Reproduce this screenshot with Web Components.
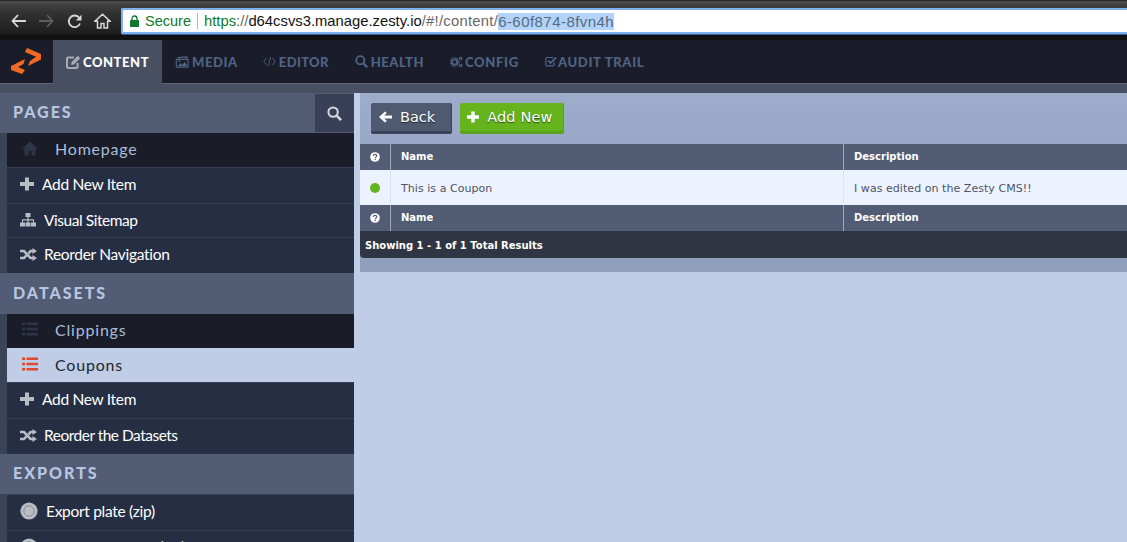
<!DOCTYPE html>
<html>
<head>
<meta charset="utf-8">
<title>Zesty</title>
<style>
  html, body { margin: 0; height: 100%; overflow: hidden; background: #bfcde6; }
  body { display: flex; flex-direction: column; font-family: "Lato", sans-serif; }
  .workspace { flex: 1; display: flex; min-height: 0; }
</style>
</head>
<body>
<browser-bar url-host="d64csvs3.manage.zesty.io" url-path="/#!/content/" url-sel="6-60f874-8fvn4h"></browser-bar>
<app-nav></app-nav>
<div class="workspace">
  <side-panel>
    <side-head search>PAGES</side-head>
    <side-item kind="dark" icon="home" pad="55" pb="4">Homepage</side-item>
    <side-item icon="plus" pad="42" h="36" pb="4">Add New Item</side-item>
    <side-item icon="sitemap" pad="44" h="34" pb="1" ls="-0.45">Visual Sitemap</side-item>
    <side-item icon="random" pad="44" h="36" pb="3">Reorder Navigation</side-item>
    <side-head h="41" pb="2">DATASETS</side-head>
    <side-item kind="dark" icon="list" pad="55" pb="4">Clippings</side-item>
    <side-item kind="active" icon="list" pad="55" pb="2">Coupons</side-item>
    <side-item icon="plus" pad="42" h="36" pb="4">Add New Item</side-item>
    <side-item icon="random" pad="44" h="36" pb="3" ls="-0.5">Reorder the Datasets</side-item>
    <side-head>EXPORTS</side-head>
    <side-item icon="disc" pad="46" h="36" pb="4">Export plate (zip)</side-item>
    <side-item icon="disc" pad="46" h="36" pb="4">Export resources (zip)</side-item>
  </side-panel>
  <main-area>
    <div slot="actions">
      <action-btn icon="back">Back</action-btn>
      <action-btn icon="plus" color="green">Add New</action-btn>
    </div>
    <data-table name="This is a Coupon" desc="I was edited on the Zesty CMS!!" total="Showing 1 - 1 of 1 Total Results"></data-table>
  </main-area>
</div>

<script>
const icons = {
  home: '<svg viewBox="0 0 16 15" width="16" height="15"><path fill="currentColor" d="M8 0.500 16 7.800H13.500V14.500H9.500V10H6.500V14.500H2.500V7.800H0Z"/></svg>',
  plus: '<svg viewBox="0 0 14 14" width="14" height="14"><path fill="currentColor" d="M5 0.500H9V5H14V9H9V13.500H5V9H0V5H5Z"/></svg>',
  sitemap: '<svg viewBox="0 0 16 14" width="16" height="14"><path fill="currentColor" d="M5.500 0H10.500V4H8.600V6.200H14V9.500H16V13.500H11V9.500H13V7.400H8.600V9.500H10.500V13.500H5.500V9.500H7.400V7.400H3V9.500H5V13.500H0V9.500H2V6.200H7.400V4H5.500Z"/></svg>',
  random: '<svg viewBox="0 0 17 13" width="17" height="13"><g fill="none" stroke="currentColor" stroke-width="2.600"><path d="M0 3H4L10.500 10H13"/><path d="M0 10H4L6.500 7.400"/><path d="M8.500 5.600 10.500 3H13"/></g><path fill="currentColor" d="M12.500 0 17 3 12.500 6ZM12.500 7 17 10 12.500 13Z"/></svg>',
  list: '<svg viewBox="0 0 16 14" width="16" height="14"><path fill="currentColor" d="M0 0.500H3V3H0ZM4.500 0.500H16V3H4.500ZM0 5.700H3V8.200H0ZM4.500 5.700H16V8.200H4.500ZM0 11H3V13.500H0ZM4.500 11H16V13.500H4.500Z"/></svg>',
  disc: '<svg viewBox="0 0 18 18" width="18" height="18"><circle cx="9" cy="9" r="8.600" fill="currentColor"/><circle cx="9" cy="9" r="5.200" fill="none" stroke="#8d8f97" stroke-width="1"/></svg>',
  search: '<svg viewBox="0 0 16 16" width="15" height="15"><circle cx="6.500" cy="6.500" r="5" fill="none" stroke="currentColor" stroke-width="2.200"/><path d="M10.300 10.300 15 15" stroke="currentColor" stroke-width="2.800" fill="none"/></svg>',
  back: '<svg viewBox="0 0 13 12" width="13" height="12"><path fill="currentColor" d="M6 0.500 7.800 2.300 5.100 4.500H13V7.500H5.100L7.800 9.700 6 11.500 0 6Z"/></svg>',
  question: '<svg viewBox="0 0 10 10" width="10" height="10"><circle cx="5" cy="5" r="4.800" fill="currentColor"/><path d="M3.200 3.900C3.300 2.900 4 2.400 5 2.400 6 2.400 6.800 3 6.800 3.800 6.800 4.900 5.400 4.900 5.400 6" fill="none" stroke="#525c74" stroke-width="1.200"/><rect x="4.600" y="6.600" width="1.300" height="1.300" fill="#525c74"/></svg>',
  edit: '<svg viewBox="0 0 15 14" width="15" height="14"><path fill="none" stroke="currentColor" stroke-width="2" d="M11.500 8V12C11.500 12.600 11 13 10.500 13H2C1.400 13 1 12.600 1 12V3.500C1 2.900 1.400 2.500 2 2.500H8"/><path fill="currentColor" d="M5.500 7.200 11.800 0.800 14.200 3.200 7.900 9.500 5.200 10Z"/></svg>',
  media: '<svg viewBox="0 0 16 13" width="14" height="12"><g fill="none" stroke="currentColor" stroke-width="1.300"><path d="M1.500 3.500V11.500C1.500 12 2 12.300 2.500 12.300H14C14.600 12.300 15 12 15 11.500V4.500C15 4 14.600 3.500 14 3.500Z"/><path d="M3.500 3 3.800 1.500 13.500 0.700 14 3"/></g><path fill="currentColor" d="M3.200 11 6.500 7.500 8.500 9.500 11 6.500 13.500 9.500V11Z"/><circle cx="5" cy="5.700" r="1.200" fill="currentColor"/></svg>',
  code: '<svg viewBox="0 0 13 11" width="13" height="11"><path fill="none" stroke="currentColor" stroke-width="0.900" d="M3.500 2 0.800 5.500 3.500 9M9.500 2 12.200 5.500 9.500 9M7.700 0.800 5.300 10.200"/></svg>',
  gears: '<svg viewBox="0 0 17 15" width="13" height="12"><circle cx="6" cy="7.500" r="3.500" fill="none" stroke="currentColor" stroke-width="2.400"/><circle cx="6" cy="7.500" r="5.700" fill="none" stroke="currentColor" stroke-width="1.500" stroke-dasharray="2 1.600"/><circle cx="14" cy="3" r="1.600" fill="none" stroke="currentColor" stroke-width="1.500"/><circle cx="14" cy="12" r="1.600" fill="none" stroke="currentColor" stroke-width="1.500"/></svg>',
  check: '<svg viewBox="0 0 15 13" width="12" height="11"><path fill="none" stroke="currentColor" stroke-width="1.500" d="M11.500 7.500V10.500C11.500 11.400 11 12 10 12H2.500C1.500 12 1 11.400 1 10.500V3C1 2 1.500 1.500 2.500 1.500H10"/><path fill="none" stroke="currentColor" stroke-width="2.200" d="M3.800 5.500 6.800 8.300 13.800 1.500"/></svg>'
};

class BrowserBar extends HTMLElement {
  constructor() {
    super();
    const shadow = this.attachShadow({mode: "open"});
    shadow.innerHTML = `
      <style>
        :host { display: flex; align-items: flex-start; height: 40px; box-sizing: border-box; padding-top: 8px; flex: none;
          background: linear-gradient(#1c1c1c 0, #555 2px, #424242 4px, #333 12px, #1d1d1d 34px, #111 35px, #111 100%);
          font-family: "Liberation Sans", Arial, sans-serif; }
        .nav { width: 121px; height: 26px; flex: none; display: flex; align-items: center; padding-left: 11px; box-sizing: border-box; gap: 13px; color: #d8d8d8; }
        svg { display: block; flex: none; }
        .url { flex: 1; height: 26px; box-sizing: border-box; background: #fff; border: 2px solid #7fb0ee; border-right: 0;
          border-radius: 2px 0 0 2px; box-shadow: 0 1px 0 #2f5f9f; display: flex; align-items: center; font-size: 14.800px; white-space: nowrap; padding-left: 7px; }
        .secure { color: #0b7a2a; font-size: 14.500px; }
        .lock { margin-right: 6px; }
        .bar { width: 1px; height: 16px; background: #b5b5b5; margin: 0 6px; }
        .https { color: #0b7a2a; }
        .grey { color: #666; }
        .path { letter-spacing: 0.270px; }
        .host { color: #111; }
        .sel { background: #b3d3f8; color: #566a80; font-size: 15px; letter-spacing: 0.450px; }
      </style>
      <div class="nav">
        <svg width="15" height="14" viewBox="0 0 15 14"><path d="M7 1 1.500 7 7 13M1.500 7H15" fill="none" stroke="currentColor" stroke-width="1.800"/></svg>
        <svg width="15" height="14" viewBox="0 0 15 14" style="color:#5e5e5e"><path d="M8 1 13.500 7 8 13M13.500 7H0" fill="none" stroke="currentColor" stroke-width="1.800"/></svg>
        <svg width="15" height="15" viewBox="0 0 15 15"><path d="M13 9.500A5.800 5.800 0 1 1 12 3.500" fill="none" stroke="currentColor" stroke-width="1.800"/><path d="M14.500 0.800V6.500H8.800Z" fill="currentColor"/></svg>
        <svg width="17" height="16" viewBox="0 0 17 16" style="margin-left:-1px"><path d="M8.500 1.200 1 8.200H3.500V15H7V10.500H10V15H13.500V8.200H16Z" fill="none" stroke="currentColor" stroke-width="1.500"/></svg>
      </div>
      <div class="url">
        <svg class="lock" width="9" height="12" viewBox="0 0 9 12"><path d="M2 5V3.500C2 1.900 3 1 4.500 1S7 1.900 7 3.500V5" fill="none" stroke="#0b7a2a" stroke-width="1.300"/><rect y="5" width="9" height="7" rx="0.800" fill="#0b7a2a"/></svg>
        <span class="secure">Secure</span><span class="bar"></span><span class="https">https</span><span class="grey">://</span><span class="host">${this.getAttribute("url-host")}</span><span class="grey path">${this.getAttribute("url-path")}</span><span class="sel">${this.getAttribute("url-sel")}</span>
      </div>
    `;
  }
}
customElements.define("browser-bar", BrowserBar);

class AppNav extends HTMLElement {
  constructor() {
    super();
    const shadow = this.attachShadow({mode: "open"});
    // icon, label, active, gap after the icon, letter spacing
    const tabs = [["edit","CONTENT",true,2,0.55],["media","MEDIA",false,3,0.6],["code","EDITOR",false,3,0.35],["search","HEALTH",false,3,0.5],["gears","CONFIG",false,2,0.7],["check","AUDIT TRAIL",false,1,0.7]];
    shadow.innerHTML = `
      <style>
        :host { display: block; flex: none; height: 53px; background: #494f62; }
        .top { height: 43px; background: #1a1d29; border-bottom: 1px solid #5c6378; display: flex; }
        .logo { width: 53px; flex: none; display: flex; align-items: center; padding-left: 11px; box-sizing: border-box; padding-bottom: 1px; }
        .tab { display: flex; align-items: center; padding: 0 13px; color: #506385; font: 900 13px "Lato", sans-serif; white-space: nowrap; }
        .tab.on { background: #494f62; color: #fff; margin-bottom: -1px; padding-bottom: 1px; }
        .tab.on svg { color: #a9abb3; }
        .tab.code { margin-left: -1px; }
        svg { display: block; flex: none; }
      </style>
      <div class="top">
        <div class="logo">
          <svg width="30" height="26" viewBox="0 0 30 26"><path fill="#f26a21" d="M16 0 30 6V11.500L17 18 19 13 25 8.700 14 4ZM0 18 14 11 12.500 16 7 19 14 22 11 26 0 22Z"/></svg>
        </div>
        ${tabs.map(t => `<div class="tab ${t[0]} ${t[2] ? "on" : ""}">${t[0] === "search" ? icons.search.replace('width="15" height="15"', 'width="13" height="13"') : icons[t[0]]}<span style="margin-left:${t[3]}px;letter-spacing:${t[4]}px">${t[1]}</span></div>`).join("")}
      </div>
    `;
  }
}
customElements.define("app-nav", AppNav);

class SidePanel extends HTMLElement {
  constructor() {
    super();
    this.attachShadow({mode: "open"}).innerHTML = `
      <style>
        :host { display: block; width: 354px; flex: none; background: #3a4459; overflow: hidden; }
      </style>
      <slot></slot>
    `;
  }
}
customElements.define("side-panel", SidePanel);

class SideHead extends HTMLElement {
  constructor() {
    super();
    const search = this.hasAttribute("search");
    this.attachShadow({mode: "open"}).innerHTML = `
      <style>
        :host { display: flex; height: ${this.getAttribute("h") || 40}px; align-items: center; justify-content: space-between; background: #525c74;
          color: #b7c5e0; font: 900 16px "Lato", sans-serif; letter-spacing: 2px; padding-left: 13px; box-sizing: border-box; }
        .l { padding-bottom: ${this.getAttribute("pb") || 3}px; }
        .s { width: 39px; height: 38px; background: #383f56; display: flex; align-items: center; justify-content: center; color: #d5d8de; }
      </style>
      <span class="l"><slot></slot></span>
      ${search ? `<div class="s">${icons.search}</div>` : ""}
    `;
  }
}
customElements.define("side-head", SideHead);

class SideItem extends HTMLElement {
  constructor() {
    super();
    const kind = this.getAttribute("kind") || "plain";
    const pad = this.getAttribute("pad");
    const h = this.getAttribute("h") || 34;
    const pb = this.getAttribute("pb") || 0;
    const big = kind !== "plain";
    const ls = this.getAttribute("ls") || (big ? 0.8 : -0.3);
    this.attachShadow({mode: "open"}).innerHTML = `
      <style>
        :host { display: flex; align-items: center; margin-left: 7px; height: ${h}px; padding-bottom: ${pb}px; box-sizing: border-box; }
        :host([kind="dark"]) { background: #1a1c27; color: #a9bcd9; }
        :host([kind="active"]) { background: #bfcde6; color: #22262f; }
        :host(:not([kind])) { background: #262e44; color: #fff; border-top: 1px solid #383f56; }
        .i { display: flex; width: ${pad - 7}px; flex: none; box-sizing: border-box; padding-left: ${big ? 15 : 13}px; color: ${kind === "dark" ? "#2e3448" : kind === "active" ? "#e04b2f" : "#b9bcc4"}; }
        .t { font-size: ${big ? 16 : 15.5}px; letter-spacing: ${ls}px; white-space: nowrap; }
      </style>
      <span class="i">${icons[this.getAttribute("icon")]}</span>
      <span class="t"><slot></slot></span>
    `;
  }
}
customElements.define("side-item", SideItem);

class MainArea extends HTMLElement {
  constructor() {
    super();
    this.attachShadow({mode: "open"}).innerHTML = `
      <style>
        :host { display: block; flex: 1; min-width: 0; margin-left: 6px; }
        .wrap { background: linear-gradient(#9dacca, #8f9eba); height: 179px; }
        .actions { display: flex; height: 51px; align-items: flex-start; padding: 10px 0 0 11px; box-sizing: border-box; }
        ::slotted(div) { display: flex; gap: 8px; }
      </style>
      <div class="wrap">
        <div class="actions"><slot name="actions"></slot></div>
        <slot></slot>
      </div>
    `;
  }
}
customElements.define("main-area", MainArea);

class ActionBtn extends HTMLElement {
  constructor() {
    super();
    this.attachShadow({mode: "open"}).innerHTML = `
      <style>
        :host { display: inline-flex; align-items: center; height: 31px; box-sizing: border-box; padding: 0 16px 0 8px; gap: 8px; color: #fff; border-radius: 2px;
          background: #4f5970; border-bottom: 3px solid #3a4359; border-right: 1px solid #3a4359;
          font: 14.500px "DejaVu Sans", Verdana, sans-serif; text-shadow: 0 1px 1px rgba(0,0,0,.6); }
        :host([color="green"]) { background: #65b41e; border-color: #5ba31a; padding: 0 10px 0 7px; letter-spacing: 0.150px; }
        :host([color="green"]) svg { width: 12px; height: 12px; }
        svg { display: block; }
      </style>
      ${icons[this.getAttribute("icon")]}<span><slot></slot></span>
    `;
  }
}
customElements.define("action-btn", ActionBtn);

class DataTable extends HTMLElement {
  constructor() {
    super();
    const head = `<div class="row head"><div class="q">${icons.question}</div><div class="name">Name</div><div class="desc">Description</div></div>`;
    this.attachShadow({mode: "open"}).innerHTML = `
      <style>
        :host { display: block; font: 11px "DejaVu Sans", Verdana, sans-serif; }
        .row { display: grid; grid-template-columns: 30px 453px 1fr; align-items: stretch; }
        .row > div { display: flex; align-items: center; box-sizing: border-box; }
        .head { height: 26px; background: #525c74; color: #fff; font-weight: bold; font-size: 10px; }
        .head > div + div { border-left: 1px solid #a2a8b6; padding: 0 0 2px 10px; }
        .q { justify-content: center; color: #fff; }
        .item { height: 35px; background: #edf3fe; color: #4c5468; letter-spacing: 0.050px; }
        .item > div + div { border-left: 1px solid #dbe3f2; padding: 1px 0 0 10px; }
        .dot { width: 10px; height: 10px; border-radius: 50%; background: #63b41f; }
        .foot { height: 27px; box-sizing: border-box; padding: 1px 0 0 5px; background: #2f3542; color: #fff; font-weight: bold; font-size: 10px; display: flex; align-items: center; border-radius: 0 0 0 4px; }
        svg { display: block; }
      </style>
      ${head}
      <div class="row item"><div class="q"><span class="dot"></span></div><div>${this.getAttribute("name")}</div><div>${this.getAttribute("desc")}</div></div>
      ${head}
      <div class="foot">${this.getAttribute("total")}</div>
    `;
  }
}
customElements.define("data-table", DataTable);
</script>
</body>
</html>
